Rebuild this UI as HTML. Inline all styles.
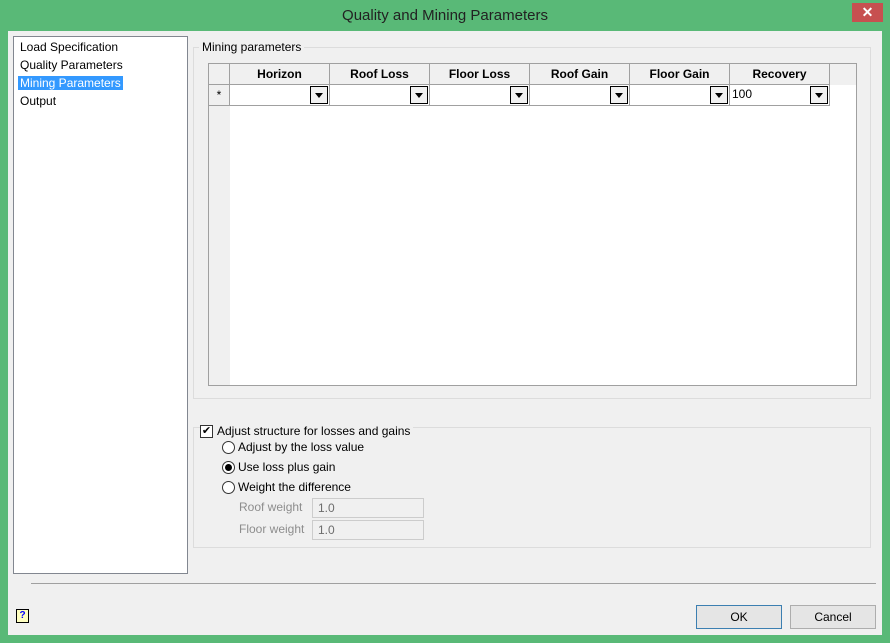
<!DOCTYPE html>
<html><head><style>
*{box-sizing:border-box;margin:0;padding:0}
body{width:890px;height:643px;background:#59b977;font-family:"Liberation Sans",sans-serif;font-size:12px;color:#000;position:relative;overflow:hidden}
.abs{position:absolute}
.title{left:0;top:0;width:890px;height:31px;text-align:center;line-height:32px;font-size:15px;color:#222}
.close{left:852px;top:3px;width:31px;height:19px;background:#c75050;color:#fff;text-align:center;line-height:18px;font-size:14px;font-weight:bold}
.client{left:8px;top:31px;width:874px;height:604px;background:#f0f0f0}
.list{left:13px;top:36px;width:175px;height:538px;background:#fff;border:1px solid #828790}
.list div{height:18px;line-height:18px;padding-left:6px;font-size:12px}
.grp{border:1px solid #dcdcdc}
.grid{left:208px;top:63px;width:649px;height:323px;background:#fff;border:1px solid #a0a0a0}
.hdr{position:absolute;top:0;height:21px;background:#f0f0f0;border-right:1px solid #a0a0a0;border-bottom:1px solid #a0a0a0;text-align:center;font-weight:bold;line-height:21px}
.cell{position:absolute;top:21px;height:21px;border-right:1px solid #a0a0a0;border-bottom:1px solid #a0a0a0;background:#fff}
.dd{position:absolute;right:1px;top:1px;width:18px;height:18px;border:1px solid #000;background:#f0f0f0}
.dd:after{content:"";position:absolute;left:4px;top:6px;border-left:4px solid transparent;border-right:4px solid transparent;border-top:5px solid #000}
.radio{width:13px;height:13px;border:1px solid #333;border-radius:50%;background:#fff}
.btn{height:24px;width:86px;background:#e5e5e5;border:1px solid #adadad;text-align:center;line-height:22px}
.inp{background:#f0f0f0;border:1px solid #ccc;width:112px;height:20px;color:#6d6d6d;padding-left:5px;line-height:18px}
</style></head><body>
<div class="abs title">Quality and Mining Parameters</div>
<div class="abs close">✕</div>
<div class="abs client"></div>
<div class="abs list"><div style="margin-top:1px">Load Specification</div><div>Quality Parameters</div><div><span style="background:#3399ff;color:#fff;padding:0 2px;margin-left:-2px">Mining Parameters</span></div><div>Output</div></div>
<div class="abs grp" style="left:193px;top:47px;width:678px;height:352px"></div>
<div class="abs" style="left:199px;top:40px;background:#f0f0f0;padding:0 3px">Mining parameters</div>
<div class="abs grid">
<div style="position:absolute;left:0;top:0;width:647px;height:21px;background:#f0f0f0"></div>
<div style="position:absolute;left:0;top:0;width:21px;height:321px;background:#f0f0f0"></div>
<div class="hdr" style="left:0;width:21px"></div>
<div class="hdr" style="left:21px;width:100px">Horizon</div>
<div class="hdr" style="left:121px;width:100px">Roof Loss</div>
<div class="hdr" style="left:221px;width:100px">Floor Loss</div>
<div class="hdr" style="left:321px;width:100px">Roof Gain</div>
<div class="hdr" style="left:421px;width:100px">Floor Gain</div>
<div class="hdr" style="left:521px;width:100px">Recovery</div>
<div class="cell" style="left:0;width:21px;background:#f0f0f0;text-align:center;line-height:20px">*</div>
<div class="cell" style="left:21px;width:100px"><div class="dd"></div></div>
<div class="cell" style="left:121px;width:100px"><div class="dd"></div></div>
<div class="cell" style="left:221px;width:100px"><div class="dd"></div></div>
<div class="cell" style="left:321px;width:100px"><div class="dd"></div></div>
<div class="cell" style="left:421px;width:100px"><div class="dd"></div></div>
<div class="cell" style="left:521px;width:100px;line-height:19px;padding-left:2px">100<div class="dd"></div></div>
</div>
<div class="abs grp" style="left:193px;top:427px;width:678px;height:121px"></div>
<div class="abs" style="left:200px;top:424px;background:#f0f0f0;padding-right:3px;display:flex;align-items:center">
<span style="width:13px;height:13px;border:1px solid #333;background:#fff;font-size:11px;line-height:11px;text-align:center;margin-right:4px">✔</span>Adjust structure for losses and gains</div>
<div class="abs" style="left:222px;top:440px;display:flex;align-items:center"><span class="radio" style="margin-right:3px"></span>Adjust by the loss value</div>
<div class="abs" style="left:222px;top:460px;display:flex;align-items:center"><span class="radio" style="margin-right:3px;position:relative"><span style="position:absolute;left:2px;top:2px;width:7px;height:7px;border-radius:50%;background:#000"></span></span>Use loss plus gain</div>
<div class="abs" style="left:222px;top:480px;display:flex;align-items:center"><span class="radio" style="margin-right:3px"></span>Weight the difference</div>
<div class="abs" style="left:239px;top:500px;color:#8d8d8d">Roof weight</div>
<div class="abs inp" style="left:312px;top:498px">1.0</div>
<div class="abs" style="left:239px;top:522px;color:#8d8d8d">Floor weight</div>
<div class="abs inp" style="left:312px;top:520px">1.0</div>
<div class="abs" style="left:31px;top:583px;width:845px;height:1px;background:#a0a0a0"></div>
<div class="abs" style="left:16px;top:609px;width:13px;height:14px;border:1px solid #000;background:#ffffc0;font-size:10px;font-weight:bold;text-align:center;line-height:12px;color:#00f">?</div>
<div class="abs btn" style="left:696px;top:605px;border-color:#3c7fb1">OK</div>
<div class="abs btn" style="left:790px;top:605px">Cancel</div>
</body></html>
